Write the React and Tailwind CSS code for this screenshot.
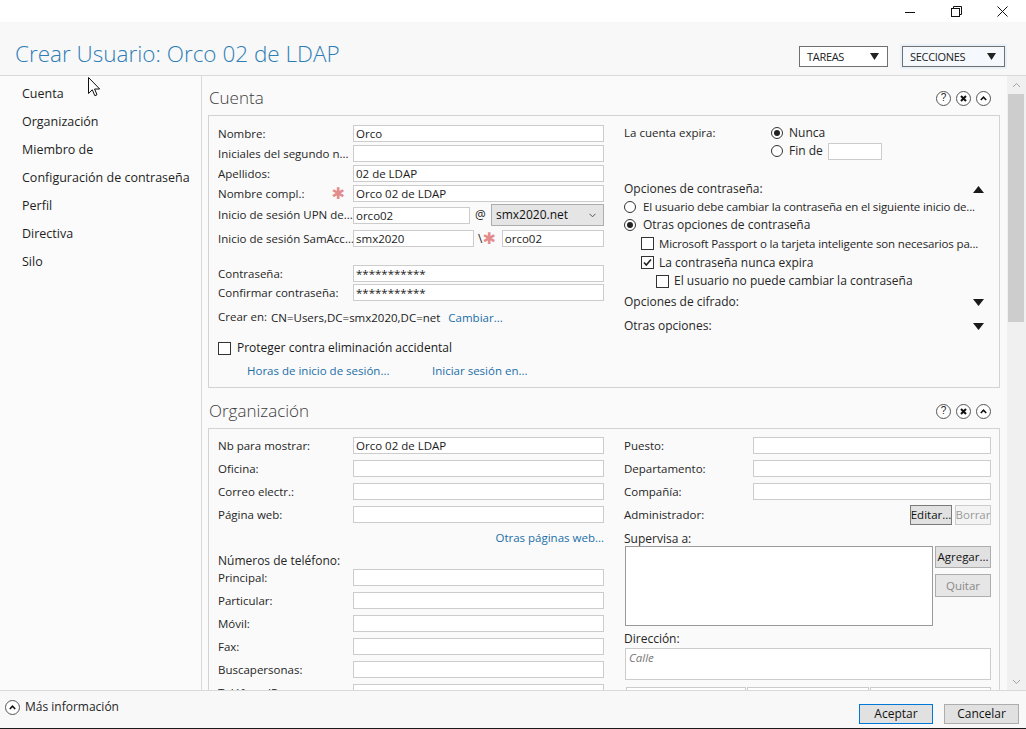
import React from 'react';

const lbl = "text-[11.5px] leading-[16px] text-[#262626] whitespace-nowrap";
const txt = "text-[12px] leading-[16px] text-[#262626] whitespace-nowrap";

function Inp({ className = "", children }) {
  return (
    <div className={"h-[17px] border border-[#cccccc] bg-white pl-[2px] text-[11.5px] leading-[15px] text-[#1a1a1a] whitespace-nowrap overflow-hidden " + className}>
      {children}
    </div>
  );
}

function Row({ label, children, className = "", w = "w-[135px]" }) {
  return (
    <div className={"flex items-center " + className}>
      <div className={w + " shrink-0 overflow-hidden " + lbl}>{label}</div>
      {children}
    </div>
  );
}

function Star({ className = "" }) {
  return (
    <span className={"font-['DejaVu_Sans',sans-serif] text-[16px] leading-[14px] text-[#e48b8b] " + className}>✱</span>
  );
}

function Radio({ checked }) {
  return (
    <span className="w-[12px] h-[12px] rounded-full border border-[#333333] bg-white flex items-center justify-center shrink-0">
      {checked && <span className="w-[6px] h-[6px] rounded-full bg-[#222222]" />}
    </span>
  );
}

function Check({ checked }) {
  return (
    <span className="w-[13px] h-[13px] border border-[#333333] bg-white flex items-center justify-center shrink-0">
      {checked && (
        <svg width="11" height="11" viewBox="0 0 11 11">
          <path d="M2 5.5 L4.3 8 L9 2.5" fill="none" stroke="#222" strokeWidth="1.6" />
        </svg>
      )}
    </span>
  );
}

function CircIcon({ children }) {
  return (
    <span className="w-[15px] h-[15px] rounded-full border border-[#555555] bg-white flex items-center justify-center">
      {children}
    </span>
  );
}

function HeaderIcons() {
  return (
    <div className="flex items-center gap-[5px]">
      <CircIcon>
        <span className="text-[10px] leading-[10px] text-[#222] font-['Liberation_Sans',sans-serif]">?</span>
      </CircIcon>
      <CircIcon>
        <svg width="9" height="9" viewBox="0 0 9 9">
          <path d="M2 2 L7 7 M7 2 L2 7" stroke="#111" strokeWidth="2" />
        </svg>
      </CircIcon>
      <CircIcon>
        <svg width="9" height="9" viewBox="0 0 9 9">
          <path d="M1.8 6 L4.5 3.2 L7.2 6" stroke="#111" strokeWidth="1.6" fill="none" />
        </svg>
      </CircIcon>
    </div>
  );
}

function SectionHeader({ title, className }) {
  return (
    <div className={"flex items-start pr-[9px] " + className}>
      <div className="flex-1 h-[22px] flex items-center">
        <span className="pl-[1px] text-[17px] leading-[22px] font-light text-[#3c3c3c]">{title}</span>
      </div>
      <div className="h-[22px] flex items-center">
        <HeaderIcons />
      </div>
    </div>
  );
}

function TriDown() {
  return (
    <svg width="11" height="7" viewBox="0 0 11 7">
      <path d="M0 0 L11 0 L5.5 7 Z" fill="#1a1a1a" />
    </svg>
  );
}
function TriUp() {
  return (
    <svg width="11" height="7" viewBox="0 0 11 7">
      <path d="M0 7 L11 7 L5.5 0 Z" fill="#1a1a1a" />
    </svg>
  );
}

function Btn({ children, className = "" }) {
  return (
    <div className={"flex items-center justify-center border text-[11.5px] leading-[14px] " + className}>{children}</div>
  );
}

const navItems = ["Cuenta", "Organización", "Miembro de", "Configuración de contraseña", "Perfil", "Directiva", "Silo"];

export default function App() {
  return (
    <div className="w-[1026px] h-[729px] overflow-hidden relative flex flex-col bg-[#fafafa] font-['Open_Sans','Noto_Sans',sans-serif] text-[#262626]">
      {/* title bar */}
      <div className="h-[22px] bg-white flex items-center justify-end shrink-0">
        <div className="w-[46px] flex justify-center">
          <svg width="10" height="10" viewBox="0 0 10 10"><path d="M0 6.5 H10" stroke="#111" strokeWidth="1" /></svg>
        </div>
        <div className="w-[46px] flex justify-center">
          <svg width="11" height="11" viewBox="0 0 11 11">
            <path d="M2.5 2.5 V0.5 H10.5 V8.5 H8.5" stroke="#111" strokeWidth="1" fill="none" />
            <rect x="0.5" y="2.5" width="8" height="8" stroke="#111" strokeWidth="1" fill="white" />
          </svg>
        </div>
        <div className="w-[46px] flex justify-center mr-[1px]">
          <svg width="11" height="11" viewBox="0 0 11 11"><path d="M0.5 0.5 L10.5 10.5 M10.5 0.5 L0.5 10.5" stroke="#111" strokeWidth="1" /></svg>
        </div>
      </div>

      {/* header */}
      <div className="h-[54px] shrink-0 border-b border-[#d9d9d9] bg-[#f8f8f8] flex items-start">
        <div className="pl-[15px] pt-[17px] flex-1">
          <span className="text-[22.5px] leading-[30px] font-light text-[#2d7db6] whitespace-nowrap">Crear Usuario: Orco 02 de LDAP</span>
        </div>
        <div className="pt-[22px] flex items-center">
          <div className="w-[89px] h-[21px] border border-[#707070] bg-white flex items-center justify-between pl-[7px] pr-[8px] mr-[12px]">
            <span className="text-[11px] leading-[14px] tracking-[-0.3px] text-[#222]">TAREAS</span>
            <svg width="9" height="7" viewBox="0 0 9 7"><path d="M0 0 L9 0 L4.5 7 Z" fill="#222" /></svg>
          </div>
          <div className="p-[2px] bg-[#e8f0f8] mr-[19px]">
            <div className="w-[103px] h-[21px] border border-[#707070] bg-[#f5f8fc] flex items-center justify-between pl-[7px] pr-[8px]">
              <span className="text-[11px] leading-[14px] tracking-[-0.3px] text-[#222]">SECCIONES</span>
              <svg width="9" height="7" viewBox="0 0 9 7"><path d="M0 0 L9 0 L4.5 7 Z" fill="#222" /></svg>
            </div>
          </div>
        </div>
      </div>

      {/* body */}
      <div className="h-[614px] shrink-0 flex">
        <nav className="w-[202px] shrink-0 border-r border-[#d9d9d9] bg-[#fbfbfb] pt-[4px]">
          {navItems.map((n) => (
            <div key={n} className="h-[28px] flex items-center pl-[22px] text-[12.5px] text-[#1e1e1e] whitespace-nowrap">{n}</div>
          ))}
        </nav>

        <div className="flex-1 overflow-hidden pl-[6px] pr-[7px]">
          {/* Cuenta */}
          <SectionHeader title="Cuenta" className="h-[39px] pt-[11px]" />
          <div className="h-[273px] border border-[#d3d3d3] bg-[#fafafa] flex pl-[9px] pr-[8px]">
            <div className="w-[386px] shrink-0 pt-[9px]">
              <Row label="Nombre:"><Inp className="flex-1">Orco</Inp></Row>
              <Row label="Iniciales del segundo n..." className="mt-[3px]"><Inp className="flex-1" /></Row>
              <Row label="Apellidos:" className="mt-[3px]"><Inp className="flex-1">02 de LDAP</Inp></Row>
              <div className="mt-[3px] flex items-center">
                <div className="w-[135px] shrink-0 flex items-center">
                  <span className={lbl}>Nombre compl.:</span>
                  <Star className="ml-auto mr-[8px]" />
                </div>
                <Inp className="flex-1">Orco 02 de LDAP</Inp>
              </div>
              <div className="mt-[2px] h-[22px] flex items-center">
                <div className={"w-[135px] shrink-0 overflow-hidden " + lbl}>Inicio de sesión UPN de...</div>
                <Inp className="w-[117px]">orco02</Inp>
                <span className="w-[21px] text-center text-[12px] leading-[16px]">@</span>
                <div className="flex-1 h-[22px] border border-[#adadad] bg-[#e5e5e5] flex items-center justify-between pl-[4px] pr-[7px]">
                  <span className="text-[12px] leading-[16px] text-[#111]">smx2020.net</span>
                  <svg width="7" height="5" viewBox="0 0 7 5"><path d="M0.5 0.8 L3.5 3.8 L6.5 0.8" stroke="#555" strokeWidth="1" fill="none" /></svg>
                </div>
              </div>
              <div className="mt-[4px] flex items-center">
                <div className={"w-[135px] shrink-0 overflow-hidden " + lbl}>Inicio de sesión SamAcc...</div>
                <Inp className="w-[121px]">smx2020</Inp>
                <span className="ml-[4px] text-[12px] leading-[16px]">\</span>
                <Star className="ml-[0px]" />
                <Inp className="ml-[6px] flex-1">orco02</Inp>
              </div>
              <Row label="Contraseña:" className="mt-[18px]"><Inp className="flex-1 text-[10px]">***********</Inp></Row>
              <Row label="Confirmar contraseña:" className="mt-[2px]"><Inp className="flex-1 text-[10px]">***********</Inp></Row>
              <div className="mt-[9px] h-[16px] flex items-center">
                <span className={lbl + " -mt-[3px]"}>Crear en:</span>
                <span className="ml-[4px] text-[11.5px] leading-[16px] text-[#1a1a1a]">CN=Users,DC=smx2020,DC=net</span>
                <span className="ml-[8px] text-[11.5px] leading-[16px] text-[#1b6fa8]">Cambiar...</span>
              </div>
              <div className="mt-[15px] h-[14px] flex items-center">
                <Check />
                <span className="ml-[6px] text-[12px] leading-[16px] text-[#1a1a1a]">Proteger contra eliminación accidental</span>
              </div>
              <div className="mt-[8px] h-[16px] flex items-center pl-[29px]">
                <span className="text-[11.5px] leading-[16px] text-[#1b6fa8] w-[185px]">Horas de inicio de sesión...</span>
                <span className="text-[11.5px] leading-[16px] text-[#1b6fa8]">Iniciar sesión en...</span>
              </div>
            </div>

            <div className="flex-1 ml-[20px] pt-[8px] min-w-0">
              <div className="flex items-start">
                <div className={"w-[147px] shrink-0 h-[18px] flex items-center " + lbl}>La cuenta expira:</div>
                <div>
                  <div className="h-[18px] flex items-center">
                    <Radio checked />
                    <span className={"ml-[6px] " + txt}>Nunca</span>
                  </div>
                  <div className="h-[18px] flex items-center">
                    <Radio />
                    <span className={"ml-[6px] " + txt}>Fin de</span>
                    <Inp className="ml-[5px] w-[54px]" />
                  </div>
                </div>
              </div>
              <div className="mt-[21px] h-[16px] flex items-center justify-between pr-[7px]">
                <span className={txt}>Opciones de contraseña:</span>
                <TriUp />
              </div>
              <div className="h-[18px] flex items-center mt-[1px]">
                <Radio />
                <span className="ml-[7px] text-[11.5px] leading-[16px] tracking-[-0.15px] text-[#262626] whitespace-nowrap overflow-hidden">El usuario debe cambiar la contraseña en el siguiente inicio de...</span>
              </div>
              <div className="h-[18px] flex items-center">
                <Radio checked />
                <span className={"ml-[7px] " + txt}>Otras opciones de contraseña</span>
              </div>
              <div className="h-[19px] flex items-center pl-[17px]">
                <Check />
                <span className="ml-[5px] text-[11.5px] leading-[16px] tracking-[-0.15px] text-[#262626] whitespace-nowrap overflow-hidden">Microsoft Passport o la tarjeta inteligente son necesarios pa...</span>
              </div>
              <div className="h-[19px] flex items-center pl-[17px]">
                <Check checked />
                <span className={"ml-[5px] " + txt}>La contraseña nunca expira</span>
              </div>
              <div className="h-[18px] flex items-center pl-[32px]">
                <Check />
                <span className={"ml-[5px] " + txt}>El usuario no puede cambiar la contraseña</span>
              </div>
              <div className="h-[24px] flex items-center justify-between pr-[7px]">
                <span className={txt}>Opciones de cifrado:</span>
                <TriDown />
              </div>
              <div className="h-[24px] flex items-center justify-between pr-[7px]">
                <span className={txt}>Otras opciones:</span>
                <TriDown />
              </div>
            </div>
          </div>

          {/* Organización */}
          <SectionHeader title="Organización" className="h-[40px] pt-[12px]" />
          <div className="h-[300px] border border-[#d3d3d3] bg-[#fafafa] flex pl-[9px] pr-[8px]">
            <div className="w-[386px] shrink-0 pt-[8px]">
              <Row label="Nb para mostrar:"><Inp className="flex-1">Orco 02 de LDAP</Inp></Row>
              <Row label="Oficina:" className="mt-[6px]"><Inp className="flex-1" /></Row>
              <Row label="Correo electr.:" className="mt-[6px]"><Inp className="flex-1" /></Row>
              <Row label="Página web:" className="mt-[6px]"><Inp className="flex-1" /></Row>
              <div className="mt-[7px] h-[16px] flex justify-end">
                <span className="text-[11.5px] leading-[16px] text-[#1b6fa8]">Otras páginas web...</span>
              </div>
              <div className={"mt-[7px] h-[16px] " + txt}>Números de teléfono:</div>
              <Row label="Principal:"><Inp className="flex-1" /></Row>
              <Row label="Particular:" className="mt-[6px]"><Inp className="flex-1" /></Row>
              <Row label="Móvil:" className="mt-[6px]"><Inp className="flex-1" /></Row>
              <Row label="Fax:" className="mt-[6px]"><Inp className="flex-1" /></Row>
              <Row label="Buscapersonas:" className="mt-[6px]"><Inp className="flex-1" /></Row>
              <Row label="Teléfono IP:" className="mt-[6px]"><Inp className="flex-1" /></Row>
            </div>

            <div className="flex-1 ml-[20px] pt-[8px] min-w-0">
              <Row label="Puesto:" w="w-[129px]"><Inp className="flex-1" /></Row>
              <Row label="Departamento:" w="w-[129px]" className="mt-[6px]"><Inp className="flex-1" /></Row>
              <Row label="Compañía:" w="w-[129px]" className="mt-[6px]"><Inp className="flex-1" /></Row>
              <div className="mt-[5px] h-[20px] flex items-center">
                <span className={lbl + " flex-1"}>Administrador:</span>
                <Btn className="w-[42px] h-[20px] border-[#7a7a7a] bg-[#e1e1e1] text-[#111]">Editar...</Btn>
                <Btn className="ml-[3px] w-[36px] h-[20px] border-[#cccccc] bg-[#f3f3f3] text-[#9a9a9a]">Borrar</Btn>
              </div>
              <div className={"mt-[7px] h-[14px] flex items-center " + txt}>Supervisa a:</div>
              <div className="flex">
                <div className="ml-[1px] w-[308px] h-[80px] border border-[#9a9a9a] bg-white" />
                <div className="ml-[2px] flex-1">
                  <Btn className="h-[22px] border-[#adadad] bg-[#e1e1e1] text-[#111]">Agregar...</Btn>
                  <Btn className="mt-[6px] h-[23px] border-[#adadad] bg-[#e6e6e6] text-[#8a8a8a]">Quitar</Btn>
                </div>
              </div>
              <div className={"mt-[6px] h-[14px] flex items-center " + txt}>Dirección:</div>
              <div className="mt-[2px] ml-[1px] h-[32px] border border-[#cccccc] bg-white pl-[3px] pt-[2px] text-[11.5px] leading-[14px] italic text-[#777777]">
                Calle
              </div>
              <div className="mt-[7px] ml-[2px] flex gap-[1px]">
                <Inp className="w-[120px]" />
                <Inp className="w-[122px]" />
                <Inp className="flex-1" />
              </div>
            </div>
          </div>
        </div>

        {/* scrollbar */}
        <div className="w-[19px] shrink-0 bg-[#f0f0f0] flex flex-col">
          <div className="h-[18px] flex items-center justify-center">
            <svg width="9" height="6" viewBox="0 0 9 6"><path d="M1 5 L4.5 1.5 L8 5" stroke="#a3a3a3" strokeWidth="1" fill="none" /></svg>
          </div>
          <div className="ml-[1px] w-[16px] h-[228px] bg-[#cdcdcd]" />
          <div className="flex-1" />
          <div className="h-[17px] flex items-center justify-center">
            <svg width="9" height="6" viewBox="0 0 9 6"><path d="M1 1 L4.5 4.5 L8 1" stroke="#a3a3a3" strokeWidth="1" fill="none" /></svg>
          </div>
        </div>
      </div>

      {/* footer */}
      <div className="h-[38px] shrink-0 border-t border-[#d9d9d9] bg-[#f8f8f8] flex items-start">
        <div className="pl-[5px] pt-[8px] flex items-center">
          <span className="w-[15px] h-[15px] rounded-full border border-[#555] bg-white flex items-center justify-center">
            <svg width="9" height="9" viewBox="0 0 9 9"><path d="M1.8 6 L4.5 3.2 L7.2 6" stroke="#111" strokeWidth="1.6" fill="none" /></svg>
          </span>
          <span className="ml-[5px] text-[12px] leading-[16px] text-[#262626]">Más información</span>
        </div>
        <div className="flex-1" />
        <Btn className="mt-[13px] w-[74px] h-[20px] border-[#0078d7] bg-[#e1e1e1] text-[#111] text-[12px]">Aceptar</Btn>
        <Btn className="mt-[13px] ml-[11px] mr-[7px] w-[75px] h-[20px] border-[#adadad] bg-[#e1e1e1] text-[#111] text-[12px]">Cancelar</Btn>
      </div>
      <div className="h-[1px] shrink-0 bg-[#1a1a1a]" />

      {/* mouse cursor */}
      <svg className="absolute left-[88px] top-[77px]" width="13" height="20" viewBox="0 0 13 20">
        <path d="M0.5 0.5 L0.5 16.5 L4.3 12.8 L6.8 18.7 L9 17.8 L6.6 12 L11.7 12 Z" fill="white" stroke="#111" strokeWidth="1" strokeLinejoin="miter" />
      </svg>
    </div>
  );
}
